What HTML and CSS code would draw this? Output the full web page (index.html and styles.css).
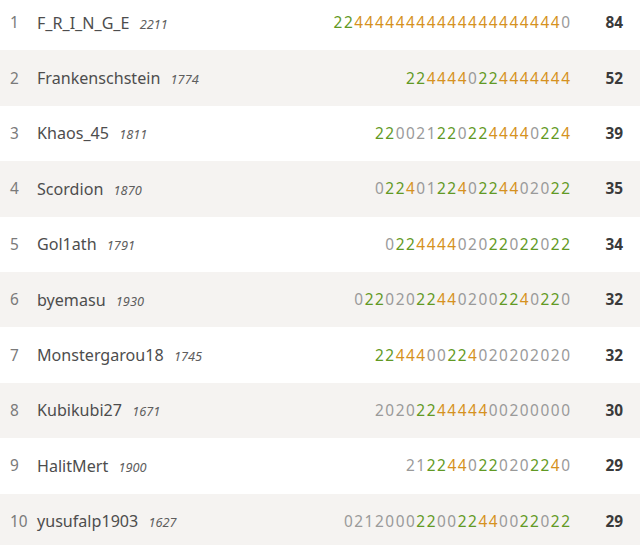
FILE: index.html
```html
<!DOCTYPE html>
<html>
<head>
<meta charset="utf-8">
<link rel="stylesheet" href="styles.css">
</head>
<body>
<div class="standing">
  <div class="row">
    <span class="rank">1</span>
    <span class="player">F_R_I_N_G_E <em class="rating">2211</em></span>
    <span class="sheet"><i class="s">22</i><i class="d">44444444444444444444</i><i>0</i></span>
    <span class="total">84</span>
  </div>
  <div class="row">
    <span class="rank">2</span>
    <span class="player">Frankenschstein <em class="rating">1774</em></span>
    <span class="sheet"><i class="s">22</i><i class="d">4444</i><i>0</i><i class="s">22</i><i class="d">4444444</i></span>
    <span class="total">52</span>
  </div>
  <div class="row">
    <span class="rank">3</span>
    <span class="player">Khaos_45 <em class="rating">1811</em></span>
    <span class="sheet"><i class="s">22</i><i>0021</i><i class="s">22</i><i>0</i><i class="s">22</i><i class="d">4444</i><i>0</i><i class="s">22</i><i class="d">4</i></span>
    <span class="total">39</span>
  </div>
  <div class="row">
    <span class="rank">4</span>
    <span class="player">Scordion <em class="rating">1870</em></span>
    <span class="sheet"><i>0</i><i class="s">22</i><i class="d">4</i><i>01</i><i class="s">22</i><i class="d">4</i><i>0</i><i class="s">22</i><i class="d">44</i><i>020</i><i class="s">22</i></span>
    <span class="total">35</span>
  </div>
  <div class="row">
    <span class="rank">5</span>
    <span class="player">Gol1ath <em class="rating">1791</em></span>
    <span class="sheet"><i>0</i><i class="s">22</i><i class="d">4444</i><i>020</i><i class="s">22</i><i>0</i><i class="s">22</i><i>0</i><i class="s">22</i></span>
    <span class="total">34</span>
  </div>
  <div class="row">
    <span class="rank">6</span>
    <span class="player">byemasu <em class="rating">1930</em></span>
    <span class="sheet"><i>0</i><i class="s">22</i><i>020</i><i class="s">22</i><i class="d">44</i><i>0200</i><i class="s">22</i><i class="d">4</i><i>0</i><i class="s">22</i><i>0</i></span>
    <span class="total">32</span>
  </div>
  <div class="row">
    <span class="rank">7</span>
    <span class="player">Monstergarou18 <em class="rating">1745</em></span>
    <span class="sheet"><i class="s">22</i><i class="d">444</i><i>00</i><i class="s">22</i><i class="d">4</i><i>020202020</i></span>
    <span class="total">32</span>
  </div>
  <div class="row">
    <span class="rank">8</span>
    <span class="player">Kubikubi27 <em class="rating">1671</em></span>
    <span class="sheet"><i>2020</i><i class="s">22</i><i class="d">44444</i><i>00200000</i></span>
    <span class="total">30</span>
  </div>
  <div class="row">
    <span class="rank">9</span>
    <span class="player">HalitMert <em class="rating">1900</em></span>
    <span class="sheet"><i>21</i><i class="s">22</i><i class="d">44</i><i>0</i><i class="s">22</i><i>020</i><i class="s">22</i><i class="d">4</i><i>0</i></span>
    <span class="total">29</span>
  </div>
  <div class="row">
    <span class="rank">10</span>
    <span class="player">yusufalp1903 <em class="rating">1627</em></span>
    <span class="sheet"><i>0212000</i><i class="s">22</i><i>00</i><i class="s">22</i><i class="d">44</i><i>00</i><i class="s">22</i><i>0</i><i class="s">22</i></span>
    <span class="total">29</span>
  </div>
</div>
</body>
</html>
```

FILE: styles.css
```css
html, body {
  margin: 0;
  padding: 0;
  background: #ffffff;
}
body {
  font-family: "Noto Sans", "Open Sans", sans-serif;
  color: #4d4d4d;
  overflow: hidden;
}
.standing {
  margin-top: -5px;
}
.row {
  display: grid;
  grid-template-columns: 27px 1fr auto 70px;
  align-items: center;
  height: 55.4px;
  padding-left: 10px;
  box-sizing: border-box;
}
.row:nth-child(even) {
  background: #f5f3f1;
}
.rank {
  font-size: 15.4px;
  color: #7a7a7a;
}
.player {
  font-size: 16.1px;
  color: #4d4d4d;
  white-space: nowrap;
}
.rating {
  font-size: 12.8px;
  font-style: italic;
  color: #5e5e5e;
  margin-left: 6px;
}
.sheet {
  font-size: 15.4px;
  letter-spacing: 0.1em;
  color: #9a9a9a;
  text-align: right;
  margin-right: -1.5px;
}
.sheet i {
  font-style: normal;
}
.sheet .s {
  color: #629924;
}
.sheet .d {
  color: #d59120;
}
.total {
  font-size: 15.4px;
  font-weight: 700;
  color: #3a3a3a;
  text-align: right;
  padding-right: 17px;
}
```
